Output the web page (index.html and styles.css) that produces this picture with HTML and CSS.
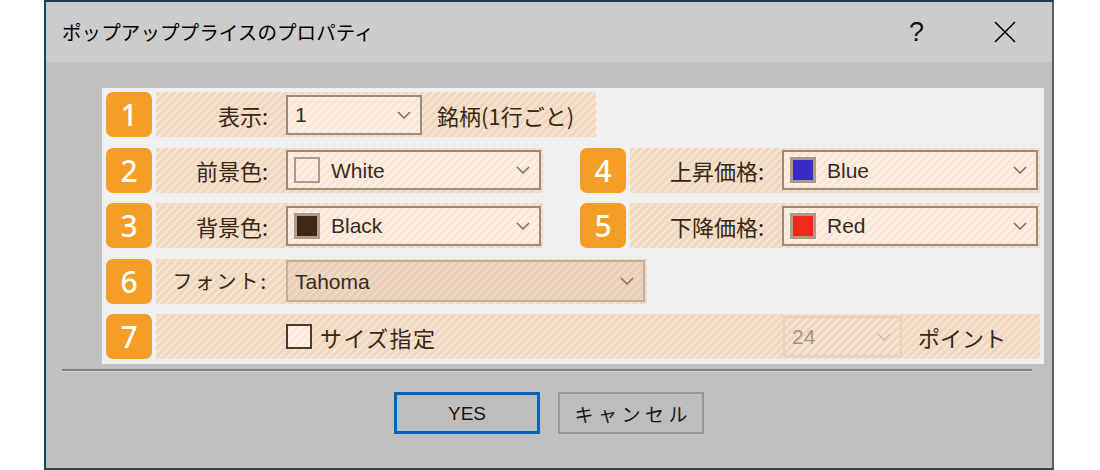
FILE: index.html
```html
<!DOCTYPE html>
<html lang="ja">
<head>
<meta charset="utf-8">
<title>ポップアッププライスのプロパティ</title>
<link rel="stylesheet" href="styles.css">
</head>
<body>
<div class="dialog">
  <div class="titlebar">
    <span class="title">ポップアッププライスのプロパティ</span>
    <span class="help">?</span>
    <svg class="close" width="22" height="22" viewBox="0 0 22 22"><path d="M1 1 L21 21 M21 1 L1 21" stroke="#000" stroke-width="1.6" fill="none"/></svg>
  </div>
  <div class="body">
    <div class="panel">
      <div class="row">
        <div class="badge">1</div>
        <div class="strip strip-1">
          <span class="label">表示:</span>
          <div class="combo combo-num"><span class="ctext">1</span><svg class="chev" width="14" height="8" viewBox="0 0 14 8"><path d="M1 1 L7 7 L13 1" stroke="#7d6b5c" stroke-width="1.5" fill="none"/></svg></div>
          <span class="suffix">銘柄(1行ごと)</span>
        </div>
      </div>
      <div class="row">
        <div class="badge">2</div>
        <div class="strip strip-half">
          <span class="label">前景色:</span>
          <div class="combo combo-color"><span class="swatch sw-white"></span><span class="ctext">White</span><svg class="chev" width="14" height="8" viewBox="0 0 14 8"><path d="M1 1 L7 7 L13 1" stroke="#7d6b5c" stroke-width="1.5" fill="none"/></svg></div>
        </div>
        <div class="badge badge-right">4</div>
        <div class="strip strip-right">
          <span class="label label-right">上昇価格:</span>
          <div class="combo combo-color-r"><span class="swatch sw-blue"></span><span class="ctext">Blue</span><svg class="chev" width="14" height="8" viewBox="0 0 14 8"><path d="M1 1 L7 7 L13 1" stroke="#7d6b5c" stroke-width="1.5" fill="none"/></svg></div>
        </div>
      </div>
      <div class="row">
        <div class="badge">3</div>
        <div class="strip strip-half">
          <span class="label">背景色:</span>
          <div class="combo combo-color"><span class="swatch sw-black"></span><span class="ctext">Black</span><svg class="chev" width="14" height="8" viewBox="0 0 14 8"><path d="M1 1 L7 7 L13 1" stroke="#7d6b5c" stroke-width="1.5" fill="none"/></svg></div>
        </div>
        <div class="badge badge-right">5</div>
        <div class="strip strip-right">
          <span class="label label-right">下降価格:</span>
          <div class="combo combo-color-r"><span class="swatch sw-red"></span><span class="ctext">Red</span><svg class="chev" width="14" height="8" viewBox="0 0 14 8"><path d="M1 1 L7 7 L13 1" stroke="#7d6b5c" stroke-width="1.5" fill="none"/></svg></div>
        </div>
      </div>
      <div class="row">
        <div class="badge">6</div>
        <div class="strip strip-font">
          <span class="label label-spaced">フォント:</span>
          <div class="combo combo-font"><span class="ctext">Tahoma</span><svg class="chev" width="14" height="8" viewBox="0 0 14 8"><path d="M1 1 L7 7 L13 1" stroke="#86705e" stroke-width="1.5" fill="none"/></svg></div>
        </div>
      </div>
      <div class="row">
        <div class="badge">7</div>
        <div class="strip strip-full">
          <span class="label"></span>
          <span class="checkbox"></span>
          <span class="checktext">サイズ指定</span>
          <div class="combo combo-spin"><span class="ctext">24</span><svg class="chev" width="14" height="8" viewBox="0 0 14 8"><path d="M1 1 L7 7 L13 1" stroke="#d2bca8" stroke-width="1.5" fill="none"/></svg></div>
          <span class="unit">ポイント</span>
        </div>
      </div>
    </div>
    <div class="sep"></div>
    <div class="buttons">
      <button class="btn btn-default">YES</button>
      <button class="btn btn-cancel">キャンセル</button>
    </div>
  </div>
</div>
</body>
</html>
```
FILE: styles.css
```css
html, body {
  margin: 0;
  padding: 0;
  background: #ffffff;
}
body {
  width: 1100px;
  height: 470px;
  overflow: hidden;
}
.dialog {
  margin-left: 44px;
  width: 1006px;
  height: 466px;
  border-left: 2px solid #17465b;
  border-top: 2px solid #1e3c4b;
  border-right: 2px solid #5c5c5c;
  border-bottom: 2px solid #2c4854;
  display: flex;
  flex-direction: column;
  font-family: "Noto Sans CJK JP", "Noto Sans", sans-serif;
}
.titlebar {
  height: 60px;
  background: #cccccc;
  display: flex;
  align-items: center;
  padding-left: 16px;
  flex-shrink: 0;
}
.title {
  flex: 1;
  font-size: 19.5px;
  letter-spacing: 0.1px;
  color: #000;
  line-height: 1;
}
.help {
  font-family: "Liberation Sans", sans-serif;
  font-size: 27px;
  color: #111;
  line-height: 1;
  margin-right: 70px;
}
.close {
  margin-right: 36px;
  display: block;
}
.body {
  flex: 1;
  background: #c0c0c0;
  padding-top: 26px;
  display: flex;
  flex-direction: column;
}
.panel {
  margin-left: 56px;
  margin-right: 8px;
  background: #f0f0f0;
  padding: 4px 4px 5px 4px;
  display: flex;
  flex-direction: column;
  gap: 10.5px;
}
.row {
  display: flex;
  gap: 4px;
  height: 45px;
}
.badge {
  width: 46px;
  height: 45px;
  border-radius: 7px;
  background: #f49d27;
  color: #fff;
  font-family: "Noto Sans", sans-serif;
  font-weight: 500;
  font-size: 30px;
  line-height: 45px;
  text-align: center;
  flex-shrink: 0;
}
.badge-right {
  margin-left: 33px;
}
.strip {
  height: 45px;
  display: flex;
  align-items: center;
  background: repeating-linear-gradient(135deg, #f0d8c0 0 3.6px, #f7e5d4 3.6px 5.66px);
  box-sizing: border-box;
}
.strip-1 { width: 440px; }
.strip-half { width: 387px; }
.strip-right { width: 410px; }
.strip-font { width: 491px; }
.strip-full { width: 884px; }
.label {
  width: 112px;
  margin-right: 18px;
  text-align: right;
  font-size: 22px;
  line-height: 1;
  color: #3a2612;
  flex-shrink: 0;
}
.label-right {
  width: 134px;
}
.label-spaced {
  letter-spacing: 2px;
  font-size: 20px;
}
.combo {
  height: 40px;
  box-sizing: border-box;
  border: 2px solid #9d8b7b;
  background: repeating-linear-gradient(135deg, #f9e6d4 0 3.6px, #fdf0e4 3.6px 5.66px);
  display: flex;
  align-items: center;
  padding-left: 7px;
  padding-right: 9px;
  flex-shrink: 0;
}
.combo .chev {
  margin-left: auto;
  display: block;
}
.ctext {
  font-family: "Liberation Sans", sans-serif;
  font-size: 21px;
  color: #3a2a1e;
  line-height: 1;
}
.combo-num { width: 136px; }
.combo-color { width: 255px; padding-left: 6px; }
.combo-color-r { width: 256px; padding-left: 6px; }
.combo-font {
  width: 359px;
  height: 42px;
  border-color: #c6ae98;
  background: repeating-linear-gradient(135deg, #e9cfb6 0 3.6px, #efdac7 3.6px 5.66px);
}
.combo-spin {
  width: 119px;
  height: 41px;
  margin-left: auto;
  border-color: #e8d0ba;
  background: repeating-linear-gradient(135deg, #efd8c2 0 3.6px, #f8e6d6 3.6px 5.66px);
}
.combo-spin .ctext {
  color: #a69482;
}
.swatch {
  width: 26px;
  height: 26px;
  box-sizing: border-box;
  margin-right: 11px;
  flex-shrink: 0;
}
.sw-white { border: 2px solid #a89a8c; background: transparent; }
.sw-black { border: 3px solid #b19d8b; background: #3d2914; }
.sw-blue { border: 3px solid #ab9a8c; background: #3a2bc6; }
.sw-red { border: 3px solid #b09a8a; background: #f0291a; }
.suffix {
  margin-left: 15px;
  font-size: 22px;
  line-height: 1;
  color: #3a2612;
}
.checkbox {
  width: 26px;
  height: 25px;
  box-sizing: border-box;
  border: 2px solid #4b3a2b;
  background: repeating-linear-gradient(135deg, #fae7d6 0 3.6px, #fef2e7 3.6px 5.66px);
  flex-shrink: 0;
}
.checktext {
  margin-left: 8px;
  font-size: 22px;
  letter-spacing: 1.4px;
  line-height: 1;
  color: #3a2612;
}
.unit {
  margin-left: 16px;
  margin-right: 34px;
  font-size: 22px;
  line-height: 1;
  color: #3a2612;
}
.sep {
  margin: 5px 20px 0 16px;
  height: 2px;
  background: #808080;
  border-bottom: 1px solid #d4d4d4;
}
.buttons {
  margin-top: 20px;
  display: flex;
  justify-content: center;
  gap: 18px;
}
.btn {
  width: 146px;
  height: 42px;
  box-sizing: border-box;
  background: #bdbdbd;
  margin: 0;
  padding: 0;
  color: #151515;
  line-height: 1;
}
.btn-default {
  border: 3px solid #0563b4;
  font-family: "Liberation Sans", sans-serif;
  font-size: 19px;
}
.btn-cancel {
  border: 2px solid #969696;
  font-family: "Noto Sans CJK JP", sans-serif;
  font-size: 19px;
  letter-spacing: 4.5px;
  padding-left: 4.5px;
}
```
